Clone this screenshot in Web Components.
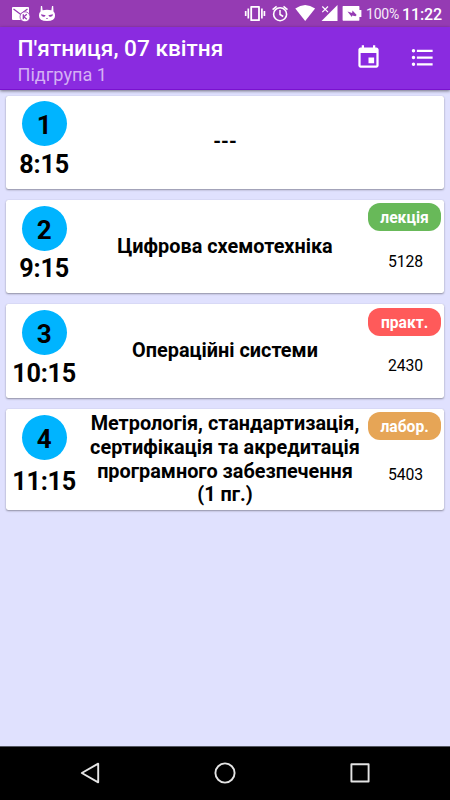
<!DOCTYPE html>
<html lang="uk">
<head>
<meta charset="utf-8">
<title>Розклад</title>
<style>
html,body{margin:0;height:100%}
body{font-family:Roboto,"Noto Sans",sans-serif;background:#e0e1fe;overflow:hidden}
</style>
</head>
<body>
<schedule-app></schedule-app>

<template id="status-bar">
<style>
:host{display:flex;align-items:center;height:27px;background:#953bb3;color:#fff;box-sizing:border-box;padding:0 9px 0 12px;flex:none}
svg{display:block;flex:none;fill:#fff}
.gap{flex:1}
.pct{font-size:14px;letter-spacing:-.2px;width:33px;white-space:nowrap;margin-left:4px;line-height:27px;color:#f6ecf9;padding-top:1px}
.time{font-size:16px;letter-spacing:-.1px;width:39px;white-space:nowrap;font-weight:500;margin-left:3px;line-height:27px;padding-top:1px}
</style>
<svg width="46" height="27" viewBox="12 0 46 27">
<rect x="12" y="7" width="17" height="13" rx="1"/>
<path d="M13.5 9l7 5.2L27.500 9" fill="none" stroke="#953bb3" stroke-width="1.3"/>
<circle cx="25" cy="16.800" r="5" stroke="#953bb3" stroke-width=".8"/>
<path d="M23.300 14.300v5M26.800 14.300l-3 2.500 3 2.500" fill="none" stroke="#953bb3" stroke-width="1.300"/>
<path d="M40.900 6h1.200l.5 4.200q4.400-.8 8.800 0L52 6h1.200l.3 5.500q1.500 1.300 1.500 3.500v1q0 5-8 5t-8-5v-1q0-2.200 1.500-3.500z"/>
<path d="M41 14.200l4.600 1q-.5 1.900-2.400 1.600-2-.3-2.200-2.600M53 14.200l-4.600 1q.5 1.900 2.400 1.600 2-.3 2.200-2.600" fill="#953bb3"/>
<path d="M46.200 18.500h1.600" stroke="#953bb3" stroke-width=".8"/>
</svg>
<span class="gap"></span>
<svg width="118" height="27" viewBox="244 0 118 27">
<path d="M251.200 6.800h7.800v13.400h-7.800z" fill="none" stroke="#fff" stroke-width="1.800" stroke-linejoin="round"/>
<path d="M248.300 8.500v10M261.900 8.500v10M245.700 11v5M264.400 11v5" fill="none" stroke="#fff" stroke-width="1.700"/>
<circle cx="280.100" cy="14.200" r="6.500" fill="none" stroke="#fff" stroke-width="1.600"/>
<path d="M280 10v4.500l3.200 2M272.600 9.700l4-3.300M287.500 9.700l-4-3.300" fill="none" stroke="#fff" stroke-width="1.500"/>
<path d="M295.300 8.600q9.900-7 19.800 0L305.200 21z"/>
<path d="M337.500 5v16h-16z"/>
<path d="M320.500 4.500h8v9h-8z" fill="#953bb3"/>
<path d="M322.300 6.500l5.700 5.600M328 6.500l-5.700 5.600" fill="none" stroke="#fff" stroke-width="1.200"/>
<path d="M343.200 6h15.600q.6 0 .6.600V10h2v7h-2v3.100q0 .6-.6.600h-15.600q-.6 0-.6-.6V6.600q0-.6.600-.6z"/>
<path d="M347.500 11.500l4.600 1.400.4-2.400 4.200 4.400-1.300 1.300-3.100-.700-.5 1.500z" fill="#953bb3"/>
</svg>
<span class="pct">100%</span><span class="time">11:22</span>
</template>

<template id="app-header">
<style>
:host{display:flex;align-items:center;height:63px;flex:none;background:#8a2be0;box-shadow:0 1px 3px rgba(0,0,0,.5);border-bottom:1px solid #7a12cf;box-sizing:border-box;padding:0 14px 0 17.5px;color:#fff;position:relative}
.text{flex:1;white-space:nowrap;padding-top:7px}
.t{font-size:22.65px;font-weight:500;line-height:27px}
.s{font-size:18.1px;line-height:26px;color:#d4b0f4}
svg{display:block;fill:#fff;margin-bottom:1px}
.cal{margin-right:27px}
</style>
<div class="text"><div class="t"><slot name="title"></slot></div><div class="s"><slot name="subtitle"></slot></div></div>
<svg class="cal" width="27" height="27" viewBox="0 0 24 24"><path d="M17 12h-5v5h5v-5zM16 1v2H8V1H6v2H5c-1.110 0-1.990.9-1.990 2L3 19c0 1.100.890 2 2 2h14c1.100 0 2-.9 2-2V5c0-1.100-.9-2-2-2h-1V1h-2zm3 18H5V8h14v11z"/></svg>
<svg width="27" height="27" viewBox="0 0 24 24"><path d="M4 10.500c-.83 0-1.500.67-1.500 1.500s.67 1.500 1.500 1.500 1.500-.67 1.500-1.500-.67-1.500-1.500-1.500zm0-6c-.83 0-1.500.67-1.500 1.500S3.170 7.500 4 7.500 5.500 6.830 5.500 6 4.830 4.500 4 4.500zm0 12c-.83 0-1.500.68-1.500 1.500s.68 1.500 1.500 1.500 1.500-.68 1.500-1.500-.67-1.500-1.500-1.500zM7 19h14v-2H7v2zm0-6h14v-2H7v2zm0-8v2h14V5H7z"/></svg>
</template>

<template id="lesson-card">
<style>
:host{display:grid;grid-template-columns:77px 1fr 77px;min-height:93.300px;background:#fff;border-radius:2.250px;box-shadow:0 1px 2px rgba(0,0,0,.36),0 0 1px rgba(0,0,0,.15);color:#000}
.left,.right{display:flex;flex-direction:column;align-items:center}
.num{width:45px;height:45px;border-radius:50%;background:#00b4ff;margin-top:5.700px;font-size:26px;font-weight:700;line-height:48px;text-align:center;flex:none}
.time{flex:1;display:flex;align-items:center;font-size:25.200px;letter-spacing:-.2px;font-weight:700;padding-bottom:6.500px}
.subject{align-self:center;text-align:center;font-size:19.850px;font-weight:700;line-height:23.700px;white-space:nowrap}
.right{align-items:flex-end;padding-right:3px}
.chip{height:27.600px;width:73.700px;border-radius:12px;margin-top:3.500px;background:var(--chip);color:#fff;font-size:15.650px;font-weight:700;text-align:center;line-height:29.500px;flex:none}
.chip[hidden]{display:none}
.room{flex:1;display:flex;align-items:center;justify-content:center;font-size:15.750px;letter-spacing:-.1px;width:71px;margin-right:.500px;padding-bottom:2px}
</style>
<div class="left"><div class="num"></div><div class="time"></div></div>
<div class="subject"><slot></slot></div>
<div class="right"><div class="chip"></div><div class="room"></div></div>
</template>

<template id="nav-bar">
<style>
:host{display:flex;align-items:center;justify-content:space-between;height:54px;background:#000;flex:none;padding:0 75px 1px;box-sizing:border-box;border-top:1px solid #555761}
svg{display:block;fill:none;stroke:#e4e4e4;stroke-width:1.900;stroke-linejoin:round}
</style>
<svg width="30" height="30"><path d="M6.800 15L23.200 5.700v18.600z"/></svg>
<svg width="30" height="30"><circle cx="15" cy="15" r="9.600"/></svg>
<svg width="30" height="30"><path d="M6.400 6.300h17.200v17.200H6.400z"/></svg>
</template>

<template id="schedule-app">
<style>
:host{display:flex;flex-direction:column;height:800px;width:450px}
main{flex:1;display:flex;flex-direction:column;gap:11.200px;padding:5.500px 5.600px}
</style>
<status-bar></status-bar>
<app-header><span slot="title">П'ятниця, 07 квітня</span><span slot="subtitle">Підгрупа 1</span></app-header>
<main>
<lesson-card num="1" time="8:15">---</lesson-card>
<lesson-card num="2" time="9:15" kind="лекція" room="5128" color="#68b959">Цифрова схемотехніка</lesson-card>
<lesson-card num="3" time="10:15" kind="практ." room="2430" color="#ff5a5a">Операційні системи</lesson-card>
<lesson-card num="4" time="11:15" kind="лабор." room="5403" color="#e6a556" style="min-height:101.300px">Метрологія, стандартизація,<br>сертифікація та акредитація<br>програмного забезпечення<br>(1 пг.)</lesson-card>
</main>
<nav-bar></nav-bar>
</template>

<script>
class Base extends HTMLElement {
  constructor() {
    super();
    const t = document.getElementById(this.localName);
    this.attachShadow({mode: "open"}).append(t.content.cloneNode(true));
  }
}
class LessonCard extends Base {
  connectedCallback() {
    const q = s => this.shadowRoot.querySelector(s);
    q(".num").textContent = this.getAttribute("num");
    q(".time").textContent = this.getAttribute("time");
    q(".room").textContent = this.getAttribute("room") || "";
    const chip = q(".chip");
    chip.textContent = this.getAttribute("kind") || "";
    chip.hidden = !this.hasAttribute("kind");
    this.style.setProperty("--chip", this.getAttribute("color"));
  }
}
customElements.define("status-bar", class extends Base {});
customElements.define("app-header", class extends Base {});
customElements.define("lesson-card", LessonCard);
customElements.define("nav-bar", class extends Base {});
customElements.define("schedule-app", class extends Base {});
</script>
</body>
</html>
